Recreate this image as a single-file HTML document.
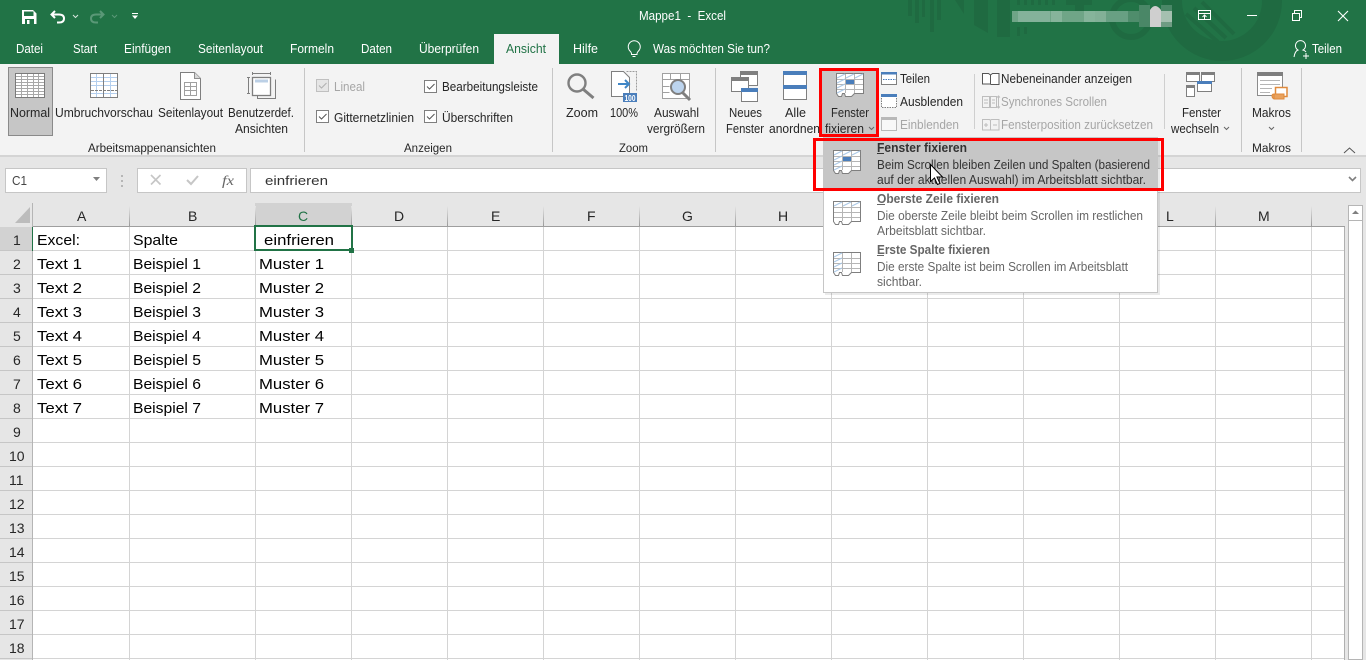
<!DOCTYPE html>
<html lang="de"><head><meta charset="utf-8"><title>Mappe1 - Excel</title>
<style>
html,body{margin:0;padding:0;width:1366px;height:660px;overflow:hidden;background:#e6e6e6}
svg{display:block}
text{font-family:"Liberation Sans",sans-serif;font-size:12.5px;fill:#262626;white-space:pre}
.w text{fill:#fff}
.g text{fill:#a6a6a6}
.c text{font-size:15px;fill:#000}
.h text{font-size:14px;fill:#262626}
.m text{fill:#444}
.m .b{font-weight:bold;font-size:12.5px}
</style></head><body>
<svg xmlns="http://www.w3.org/2000/svg" width="1366" height="660" viewBox="0 0 1366 660">
<rect width="1366" height="64" fill="#217346"/>
<!-- title pattern -->
<g fill="#1f6a41">
<rect x="908" width="4" height="16"/><rect x="915" width="4" height="23"/><rect x="922" width="3" height="17"/><rect x="930" width="4" height="32"/><rect x="937" width="4" height="20"/>
<path d="M955 0h9v14zM974 0h14v33l-14-8zM997 0h13v37h-13z"/>
<rect x="1017" y="27" width="3" height="9"/><rect x="1024" y="27" width="3" height="7"/><rect x="1017" width="3" height="5"/><rect x="1024" width="3" height="5"/><rect x="1031" width="3" height="5"/><rect x="1038" width="3" height="5"/><rect x="1045" width="3" height="5"/><rect x="1052" width="3" height="5"/>
<rect x="1066" width="26" height="5"/><rect x="1075" width="9" height="20"/>
</g>
<circle cx="1131" cy="18" r="19" fill="none" stroke="#1f6a41" stroke-width="6"/>
<circle cx="1222" cy="1" r="50" fill="none" stroke="#1f6a41" stroke-width="20"/>
<path d="M1178 20l30 25M1186 14l32 28M1194 8l32 30M1202 2l32 32" stroke="#1f6a41" stroke-width="4" fill="none"/>
<!-- blurred account -->
<rect x="1012" y="11" width="160" height="11" fill="#6fa587"/>
<rect x="1018" y="11" width="32" height="11" fill="#84b29a"/><rect x="1051" y="11" width="11" height="11" fill="#86b49b"/><rect x="1084" y="11" width="11" height="11" fill="#86b49b"/><rect x="1095" y="11" width="11" height="11" fill="#82b097"/><rect x="1106" y="11" width="22" height="11" fill="#68a083"/><rect x="1128" y="11" width="22" height="11" fill="#4f8d6c"/>
<rect x="1139" y="5" width="11" height="22" fill="#4a8767"/><rect x="1150" y="10" width="11" height="17" fill="#cfcfcf"/><path d="M1150 10q5-8 11 0z" fill="#cfcfcf"/><rect x="1161" y="11" width="11" height="11" fill="#a5c0b0"/><rect x="1161" y="22" width="11" height="5" fill="#6f9c83"/><rect x="1161" y="5" width="11" height="6" fill="#4a8767"/>
<!-- QAT -->
<path d="M22 10h11l3.500 3.500V24H22z" fill="#fff"/><rect x="24" y="11.500" width="9.500" height="4.500" fill="#217346"/><rect x="25" y="19" width="9" height="5" fill="#217346"/><rect x="27" y="20" width="2.500" height="4" fill="#fff"/>
<path d="M55 11l-3.500 3.500 3.500 3.500M52 14.500h7q5 0 5 4t-5 4h-2" fill="none" stroke="#fff" stroke-width="2"/>
<path d="M73 15l2.500 2.500 2.500-2.500" fill="none" stroke="#d8e6de" stroke-width="1"/>
<path d="M100 11l3.500 3.500-3.500 3.500M103 14.500h-7q-5 0-5 4t5 4h2" fill="none" stroke="#5a9877" stroke-width="2"/>
<path d="M112 15l2.500 2.500 2.500-2.500" fill="none" stroke="#5a9877"/>
<rect x="132" y="13" width="6" height="1" fill="#fff"/><path d="M132 15.500h6l-3 3.500z" fill="#fff"/>
<!-- title/window -->
<g class="w">
<text x="639" y="20" textLength="87" lengthAdjust="spacingAndGlyphs">Mappe1  -  Excel</text>
<text x="16" y="53" textLength="27" lengthAdjust="spacingAndGlyphs">Datei</text>
<text x="73" y="53" textLength="24" lengthAdjust="spacingAndGlyphs">Start</text>
<text x="124" y="53" textLength="47" lengthAdjust="spacingAndGlyphs">Einfügen</text>
<text x="198" y="53" textLength="65" lengthAdjust="spacingAndGlyphs">Seitenlayout</text>
<text x="290" y="53" textLength="44" lengthAdjust="spacingAndGlyphs">Formeln</text>
<text x="361" y="53" textLength="31" lengthAdjust="spacingAndGlyphs">Daten</text>
<text x="419" y="53" textLength="60" lengthAdjust="spacingAndGlyphs">Überprüfen</text>
<text x="573" y="53" textLength="25" lengthAdjust="spacingAndGlyphs">Hilfe</text>
<text x="653" y="53" textLength="117" lengthAdjust="spacingAndGlyphs">Was möchten Sie tun?</text>
<text x="1312" y="53" textLength="30" lengthAdjust="spacingAndGlyphs">Teilen</text>
</g>
<rect x="494" y="34" width="65" height="30" fill="#f3f3f3"/>
<text x="506" y="53" textLength="40" lengthAdjust="spacingAndGlyphs" style="fill:#217346">Ansicht</text>
<!-- bulb -->
<path d="M631.500 54.500v-1q0-1-1.500-2.500a6 6 0 1 1 8.500 0q-1.500 1.500-1.500 2.500v1zM632.500 56.500h3" fill="none" stroke="#fff"/>
<!-- window controls -->
<path d="M1198.500 10.500h12v9h-12zM1198.500 13.500h12M1204.500 19v-4M1202.500 17l2-2 2 2" fill="none" stroke="#fff"/>
<rect x="1247" y="15" width="10" height="1" fill="#fff"/>
<path d="M1292.500 13.500h7v7h-7zM1294.500 13v-2.500h7v7H1300" fill="none" stroke="#fff"/>
<path d="M1338 11l10 10M1348 11l-10 10" stroke="#fff" stroke-width="1.100"/>
<path d="M1294 57q1-6 4-7a5 5 0 1 1 5 0q2 .5 3 2M1303 56h6M1306 53v6" fill="none" stroke="#fff"/>
<!-- ribbon -->
<rect y="64" width="1366" height="91" fill="#f3f3f3"/>
<rect y="155" width="1366" height="2" fill="#d4d4d4"/>
<rect y="157" width="1366" height="46" fill="#e6e6e6"/>
<path d="M304.500 68v84M552.500 68v84M715.500 68v84M1241.500 68v84M1301.500 68v84" stroke="#c6c6c6"/>
<path d="M974.500 74v55M1164.500 74v55" stroke="#cfcfcf"/>
<rect x="8.500" y="67.500" width="44" height="68" fill="#c6c6c6" stroke="#8a8a8a"/>
<!-- Normal icon -->
<rect x="15.500" y="73.500" width="29" height="24" fill="#fff"/>
<path d="M16 76.500h28M16 79.500h28M16 82.500h28M16 85.500h28M16 88.500h28M16 91.500h28M16 94.500h28M21.500 74v23M27.500 74v23M33.500 74v23M38.500 74v23" stroke="#a8a8a8" fill="none"/>
<rect x="15.500" y="73.500" width="29" height="24" fill="none" stroke="#7a7a7a"/>
<!-- Umbruch icon -->
<rect x="90.500" y="73.500" width="27" height="24" fill="#fff" stroke="#7f7f7f"/>
<path d="M91 77.500h26M91 81.500h26M91 85.500h26M91 93.500h26M96.500 74v23M110.500 74v23" stroke="#b4cfee" fill="none"/>
<path d="M103.500 74v23" stroke="#7f7f7f"/><path d="M91 90.500h26" stroke="#7f7f7f" stroke-dasharray="3 1"/>
<!-- Seitenlayout icon -->
<path d="M180.500 72.500h14l6 6v21h-20z" fill="#fff" stroke="#7f7f7f"/><path d="M194.500 72.500v6h6" fill="#d8d8d8" stroke="#8f8f8f"/>
<path d="M184.500 82.500h12v13h-12zM184.500 86.500h12M184.500 90.500h12M190.500 82v13" fill="none" stroke="#a0a0a0"/>
<!-- Benutzer icon -->
<rect x="252.500" y="77.500" width="18" height="18" fill="#fff" stroke="#7f7f7f" stroke-width="1.300"/><rect x="255" y="79.500" width="13" height="3" fill="#bcd0e6"/>
<path d="M252.500 73.500h18M252.500 72v3M270.500 72v3M247 77.500h3M248.500 78v15M247 93.500h3M257.500 96v2.500h18v-19" fill="none" stroke="#7f7f7f"/>
<!-- Zoom icons -->
<circle cx="577" cy="83" r="8.500" fill="none" stroke="#7f7f7f" stroke-width="2.400"/><path d="M583.500 89.500l10 8.500" stroke="#7f7f7f" stroke-width="3"/>
<path d="M611.500 71.500h12l6 6v19h-18z" fill="#fff" stroke="#7f7f7f"/><path d="M626.500 71.500h10v20" fill="none" stroke="#9c9c9c" stroke-dasharray="2 1"/>
<path d="M625 80l4 4-4 4M618 84h11" fill="none" stroke="#3f86c6" stroke-width="2"/>
<rect x="623" y="93" width="14" height="9" fill="#4a7ebb"/><text x="624.500" y="101" textLength="11" lengthAdjust="spacingAndGlyphs" style="font-size:8px;fill:#fff;font-weight:bold">100</text>
<path d="M662.500 73.500h27v25h-27zM662.500 79.500h27M662.500 86.500h7M662.500 92.500h7M670.500 74v5M680.500 74v5" fill="#fff" stroke="#a0a0a0"/>
<circle cx="678" cy="87" r="7" fill="#bcd4ee" stroke="#7f7f7f" stroke-width="2"/><path d="M682 92l8 8" stroke="#7f7f7f" stroke-width="3"/>
<!-- Neues Fenster -->
<rect x="740.500" y="71.500" width="17" height="14" fill="#fff" stroke="#7f7f7f"/><rect x="740" y="71" width="18" height="4" fill="#7f7f7f"/>
<rect x="731.500" y="77.500" width="17" height="14" fill="#fff" stroke="#7f7f7f"/><rect x="731" y="77" width="18" height="4" fill="#7f7f7f"/>
<rect x="741.500" y="88.500" width="16" height="13" fill="#fff" stroke="#7f7f7f"/><rect x="741" y="88" width="17" height="4" fill="#4a7ebb"/>
<!-- Alle anordnen -->
<rect x="783.500" y="71.500" width="23" height="28" fill="#fff" stroke="#7f7f7f"/><rect x="783" y="71" width="24" height="4" fill="#4a7ebb"/><rect x="783" y="85" width="24" height="4" fill="#4a7ebb"/>
<!-- Fenster fixieren button -->
<rect x="820" y="69" width="58" height="67" fill="#c6c6c6"/>
<g id="fx"><path d="M836.500 73.500h27v20h-9l-3 3h-6l-1-3h-2l-1 3h-3l-2-3z" fill="#fff" stroke="#7f7f7f"/>
<path d="M837 79.500h26M837 84.500h26M837 89.500h26M845.500 74v19M854.500 74v19" stroke="#b5b5b5" fill="none"/>
<path d="M837 78l8-4M846 78l8-4M855 78l8-4M837 83l8-4M837 88l8-4M837 93l8-4" stroke="#a9c8e6" fill="none"/>
<rect x="846" y="80" width="8" height="4" fill="#4a7ebb"/></g>
<rect x="820.500" y="69.500" width="57" height="66" fill="none" stroke="#f00" stroke-width="3"/>
<path d="M869 127l2.500 2.500 2.500-2.500" fill="none" stroke="#666"/>
<!-- small icons -->
<rect x="881.500" y="73.500" width="15" height="11" fill="#fff" stroke="#7f7f7f"/><rect x="881" y="72" width="16" height="2.500" fill="#4a7ebb"/><path d="M883 79.500h13" stroke="#4a7ebb" stroke-dasharray="1.500 1"/>
<rect x="881.500" y="95.500" width="15" height="12" fill="#fff" stroke="#7f7f7f" stroke-dasharray="1.500 1"/><rect x="881" y="94" width="16" height="3" fill="#4a7ebb"/>
<rect x="881.500" y="118.500" width="15" height="12" fill="#f8f8f8" stroke="#b8b8b8"/><rect x="881" y="117" width="16" height="3" fill="#b8b8b8"/>
<path d="M982.500 73.500h6l2 1.500v9h-8zM990.500 75l2-1.500h6.500v11h-8.500" fill="#fff" stroke="#555"/>
<g stroke="#bdbdbd" fill="none"><path d="M982.500 96.500h7v11h-7zM990.500 96.500h6v11h-6zM984 100h4M984 103h4M992 100h3M992 103h3M998.500 96v12M997 97.500l1.500-1.500 1.500 1.500M997 106.500l1.500 1.500 1.500-1.500"/>
<path d="M982.500 119.500h7l1 1v9.500h-8zM990.500 120l1-.5h7.500v10.500h-8.500M984 125h4M986 123v4M993 125h4"/></g>
<!-- fenster wechseln -->
<path d="M1186.500 72.500h13v9h-13zM1201.500 72.500h13v9h-13zM1186.500 85.500h8v11h-8z" fill="#fff" stroke="#7f7f7f"/>
<rect x="1186" y="72" width="14" height="3" fill="#7f7f7f"/><rect x="1201" y="72" width="14" height="3" fill="#7f7f7f"/><rect x="1186" y="85" width="9" height="3" fill="#7f7f7f"/>
<rect x="1197.500" y="81.500" width="14" height="10" fill="#fff" stroke="#7f7f7f"/><rect x="1197" y="81" width="15" height="3" fill="#4a7ebb"/>
<!-- Makros icon -->
<rect x="1257.500" y="72.500" width="25" height="23" fill="#fff" stroke="#8c8c8c"/><rect x="1257" y="72" width="26" height="4" fill="#7f7f7f"/>
<path d="M1260 80.500h20M1260 84.500h20M1260 88.500h12M1260 92.500h10" stroke="#b5b5b5"/>
<path d="M1275.500 87.500h11.500v9h-11.500z" fill="#fff" stroke="#e08a3c" stroke-width="1.500"/><path d="M1274 94h10v5h-10zM1274 99v-5q-2 0-2 2t2 3" fill="#e9a15d" stroke="#e08a3c"/>
<path d="M1269 127l2.500 2.500 2.500-2.500M1224 127l2.500 2.500 2.500-2.500" fill="none" stroke="#666"/>
<path d="M1344 153l5.500-5 5.500 5" fill="none" stroke="#555"/>
<!-- Ribbon text -->
<g>
<text x="10" y="117" textLength="40" lengthAdjust="spacingAndGlyphs">Normal</text>
<text x="55" y="117" textLength="98" lengthAdjust="spacingAndGlyphs">Umbruchvorschau</text>
<text x="158" y="117" textLength="65" lengthAdjust="spacingAndGlyphs">Seitenlayout</text>
<text x="228" y="117" textLength="66" lengthAdjust="spacingAndGlyphs">Benutzerdef.</text>
<text x="235" y="133" textLength="53" lengthAdjust="spacingAndGlyphs">Ansichten</text>
<text x="88" y="152" textLength="128" lengthAdjust="spacingAndGlyphs" style="font-size:11.5px">Arbeitsmappenansichten</text>
<text x="404" y="152" textLength="48" lengthAdjust="spacingAndGlyphs" style="font-size:11.5px">Anzeigen</text>
<text x="619" y="152" textLength="29" lengthAdjust="spacingAndGlyphs" style="font-size:11.5px">Zoom</text>
<text x="1252" y="152" textLength="39" lengthAdjust="spacingAndGlyphs" style="font-size:11.5px">Makros</text>
<text x="334" y="122" textLength="80" lengthAdjust="spacingAndGlyphs">Gitternetzlinien</text>
<text x="442" y="91" textLength="96" lengthAdjust="spacingAndGlyphs">Bearbeitungsleiste</text>
<text x="442" y="122" textLength="71" lengthAdjust="spacingAndGlyphs">Überschriften</text>
<text x="566" y="117" textLength="32" lengthAdjust="spacingAndGlyphs">Zoom</text>
<text x="610" y="117" textLength="28" lengthAdjust="spacingAndGlyphs">100%</text>
<text x="654" y="117" textLength="45" lengthAdjust="spacingAndGlyphs">Auswahl</text>
<text x="647" y="133" textLength="58" lengthAdjust="spacingAndGlyphs">vergrößern</text>
<text x="729" y="117" textLength="33" lengthAdjust="spacingAndGlyphs">Neues</text>
<text x="726" y="133" textLength="38" lengthAdjust="spacingAndGlyphs">Fenster</text>
<text x="785" y="117" textLength="21" lengthAdjust="spacingAndGlyphs">Alle</text>
<text x="769" y="133" textLength="51" lengthAdjust="spacingAndGlyphs">anordnen</text>
<text x="831" y="117" textLength="38" lengthAdjust="spacingAndGlyphs">Fenster</text>
<text x="825" y="133" textLength="39" lengthAdjust="spacingAndGlyphs">fixieren</text>
<text x="900" y="83" textLength="30" lengthAdjust="spacingAndGlyphs">Teilen</text>
<text x="900" y="106" textLength="63" lengthAdjust="spacingAndGlyphs">Ausblenden</text>
<text x="1001" y="83" textLength="131" lengthAdjust="spacingAndGlyphs">Nebeneinander anzeigen</text>
<text x="1182" y="117" textLength="39" lengthAdjust="spacingAndGlyphs">Fenster</text>
<text x="1171" y="133" textLength="48" lengthAdjust="spacingAndGlyphs">wechseln</text>
<text x="1252" y="117" textLength="39" lengthAdjust="spacingAndGlyphs">Makros</text>
</g>
<g class="g">
<text x="334" y="91" textLength="31" lengthAdjust="spacingAndGlyphs">Lineal</text>
<text x="900" y="129" textLength="59" lengthAdjust="spacingAndGlyphs">Einblenden</text>
<text x="1001" y="106" textLength="106" lengthAdjust="spacingAndGlyphs">Synchrones Scrollen</text>
<text x="1001" y="129" textLength="152" lengthAdjust="spacingAndGlyphs">Fensterposition zurücksetzen</text>
</g>
<!-- checkboxes -->
<rect x="316.500" y="79.500" width="12" height="12" fill="#e6e6e6" stroke="#c0c0c0"/><path d="M319 85.500l2.500 2.500 5-5" fill="none" stroke="#b0b0b0"/>
<rect x="316.500" y="110.500" width="12" height="12" fill="#fff" stroke="#7f7f7f"/><path d="M319 116.500l2.500 2.500 5-5" fill="none" stroke="#555"/>
<rect x="424.500" y="80.500" width="12" height="12" fill="#fff" stroke="#7f7f7f"/><path d="M427 86.500l2.500 2.500 5-5" fill="none" stroke="#555"/>
<rect x="424.500" y="110.500" width="12" height="12" fill="#fff" stroke="#7f7f7f"/><path d="M427 116.500l2.500 2.500 5-5" fill="none" stroke="#555"/>
<!-- Formula bar -->
<rect x="5.500" y="168.500" width="101" height="24" fill="#fff" stroke="#c6c6c6"/>
<text x="12" y="185" textLength="15" lengthAdjust="spacingAndGlyphs" style="font-size:13px;fill:#444">C1</text>
<path d="M93 177h7l-3.500 4z" fill="#7f7f7f"/>
<path d="M122 175v2M122 180v2M122 185v2" stroke="#a6a6a6" stroke-width="1.500"/>
<rect x="137.500" y="168.500" width="109" height="24" fill="#fff" stroke="#c6c6c6"/>
<path d="M151 175l9.500 9.500M160.500 175l-9.500 9.500" stroke="#c6c6c6" stroke-width="1.600"/>
<path d="M187 180l4 4 7-8" fill="none" stroke="#c6c6c6" stroke-width="2"/>
<text x="222" y="185" textLength="12" lengthAdjust="spacingAndGlyphs" style="font-family:'Liberation Serif',serif;font-style:italic;font-size:14px;fill:#666">fx</text>
<rect x="250.500" y="168.500" width="1110" height="24" fill="#fff" stroke="#c6c6c6"/>
<text x="265" y="185" textLength="63" lengthAdjust="spacingAndGlyphs" style="font-size:13px;fill:#333">einfrieren</text>
<path d="M1349 177l3.500 3.500 3.500-3.500" fill="none" stroke="#7f7f7f" stroke-width="1.600"/>
<!-- sheet -->
<rect x="33" y="227" width="1312" height="433" fill="#fff"/>
<rect x="0" y="203" width="1346" height="24" fill="#e6e6e6"/>
<rect x="0" y="227" width="33" height="433" fill="#e6e6e6"/>
<rect x="255" y="203" width="97" height="24" fill="#d2d2d2"/>
<rect x="0" y="227" width="33" height="24" fill="#d2d2d2"/>
<path d="M30 207v16H15z" fill="#bcbcbc"/>
<path d="M129.500 227V660M255.500 227V660M351.500 227V660M447.500 227V660M543.500 227V660M639.500 227V660M735.500 227V660M831.500 227V660M927.500 227V660M1023.500 227V660M1119.500 227V660M1215.500 227V660M1311.500 227V660" stroke="#d4d4d4"/>
<path d="M33 250.500H1345M33 274.500H1345M33 298.500H1345M33 322.500H1345M33 346.500H1345M33 370.500H1345M33 394.500H1345M33 418.500H1345M33 442.500H1345M33 466.500H1345M33 490.500H1345M33 514.500H1345M33 538.500H1345M33 562.500H1345M33 586.500H1345M33 610.500H1345M33 634.500H1345M33 658.500H1345" stroke="#d4d4d4"/>
<path d="M0 274.500H33M0 298.500H33M0 322.500H33M0 346.500H33M0 370.500H33M0 394.500H33M0 418.500H33M0 442.500H33M0 466.500H33M0 490.500H33M0 514.500H33M0 538.500H33M0 562.500H33M0 586.500H33M0 610.500H33M0 634.500H33M0 658.500H33M0 250.500H33" stroke="#c6c6c6"/>
<path d="M33 226.500H1345" stroke="#9e9e9e"/><path d="M1344.500 227V660" stroke="#b0b0b0"/><path d="M32.500 203V660" stroke="#b5b5b5"/>
<defs><linearGradient id="s" x1="0" y1="0" x2="0" y2="1"><stop offset="0" stop-color="#e6e6e6"/><stop offset="1" stop-color="#9a9a9a"/></linearGradient></defs>
<g fill="url(#s)"><rect x="129" y="206" width="1" height="20"/><rect x="255" y="206" width="1" height="20"/><rect x="351" y="206" width="1" height="20"/><rect x="447" y="206" width="1" height="20"/><rect x="543" y="206" width="1" height="20"/><rect x="639" y="206" width="1" height="20"/><rect x="735" y="206" width="1" height="20"/><rect x="831" y="206" width="1" height="20"/><rect x="927" y="206" width="1" height="20"/><rect x="1023" y="206" width="1" height="20"/><rect x="1119" y="206" width="1" height="20"/><rect x="1215" y="206" width="1" height="20"/><rect x="1311" y="206" width="1" height="20"/></g>
<g class="h">
<text x="77" y="221">A</text><text x="188" y="221">B</text><text x="298" y="221" style="fill:#217346">C</text><text x="394" y="221">D</text><text x="491" y="221">E</text><text x="587" y="221">F</text><text x="682" y="221">G</text><text x="778" y="221">H</text><text x="1166" y="221">L</text><text x="1258" y="221">M</text>
<text x="13" y="245">1</text><text x="13" y="269">2</text><text x="13" y="293">3</text><text x="13" y="317">4</text><text x="13" y="341">5</text><text x="13" y="365">6</text><text x="13" y="389">7</text><text x="13" y="413">8</text><text x="13" y="437">9</text>
<text x="9" y="461">10</text><text x="9" y="485">11</text><text x="9" y="509">12</text><text x="9" y="533">13</text><text x="9" y="557">14</text><text x="9" y="581">15</text><text x="9" y="605">16</text><text x="9" y="629">17</text><text x="9" y="653">18</text>
</g>
<g class="c">
<text x="37" y="245" textLength="43" lengthAdjust="spacingAndGlyphs">Excel:</text><text x="133" y="245" textLength="45" lengthAdjust="spacingAndGlyphs">Spalte</text><text x="264" y="245" textLength="70" lengthAdjust="spacingAndGlyphs">einfrieren</text>
<text x="37" y="269" textLength="45" lengthAdjust="spacingAndGlyphs">Text 1</text><text x="133" y="269" textLength="68" lengthAdjust="spacingAndGlyphs">Beispiel 1</text><text x="259" y="269" textLength="65" lengthAdjust="spacingAndGlyphs">Muster 1</text>
<text x="37" y="293" textLength="45" lengthAdjust="spacingAndGlyphs">Text 2</text><text x="133" y="293" textLength="68" lengthAdjust="spacingAndGlyphs">Beispiel 2</text><text x="259" y="293" textLength="65" lengthAdjust="spacingAndGlyphs">Muster 2</text>
<text x="37" y="317" textLength="45" lengthAdjust="spacingAndGlyphs">Text 3</text><text x="133" y="317" textLength="68" lengthAdjust="spacingAndGlyphs">Beispiel 3</text><text x="259" y="317" textLength="65" lengthAdjust="spacingAndGlyphs">Muster 3</text>
<text x="37" y="341" textLength="45" lengthAdjust="spacingAndGlyphs">Text 4</text><text x="133" y="341" textLength="68" lengthAdjust="spacingAndGlyphs">Beispiel 4</text><text x="259" y="341" textLength="65" lengthAdjust="spacingAndGlyphs">Muster 4</text>
<text x="37" y="365" textLength="45" lengthAdjust="spacingAndGlyphs">Text 5</text><text x="133" y="365" textLength="68" lengthAdjust="spacingAndGlyphs">Beispiel 5</text><text x="259" y="365" textLength="65" lengthAdjust="spacingAndGlyphs">Muster 5</text>
<text x="37" y="389" textLength="45" lengthAdjust="spacingAndGlyphs">Text 6</text><text x="133" y="389" textLength="68" lengthAdjust="spacingAndGlyphs">Beispiel 6</text><text x="259" y="389" textLength="65" lengthAdjust="spacingAndGlyphs">Muster 6</text>
<text x="37" y="413" textLength="45" lengthAdjust="spacingAndGlyphs">Text 7</text><text x="133" y="413" textLength="68" lengthAdjust="spacingAndGlyphs">Beispiel 7</text><text x="259" y="413" textLength="65" lengthAdjust="spacingAndGlyphs">Muster 7</text>
</g>
<!-- selection -->
<rect x="255" y="226" width="97" height="24" fill="none" stroke="#217346" stroke-width="2"/>
<rect x="349" y="248" width="5" height="5" fill="#217346"/>
<rect x="32" y="227" width="1" height="24" fill="#217346"/>
<!-- scrollbar -->
<rect x="1348.500" y="205.500" width="14" height="454" fill="#fff" stroke="#b5b5b5"/>
<path d="M1349 220.500h13" stroke="#b5b5b5"/>
<path d="M1352 214h7l-3.500-3.500z" fill="#7f7f7f"/>
<!-- dropdown -->
<rect x="825" y="139" width="335" height="156" fill="#000" opacity=".08"/>
<rect x="823.500" y="137.500" width="334" height="155" fill="#fff" stroke="#c6c6c6"/>
<rect x="824" y="140" width="333" height="50" fill="#c6c6c6"/>
<use href="#fx" transform="translate(-3 77)"/>
<g transform="translate(-3 128)"><path d="M836.500 73.500h27v20h-9l-3 3h-6l-1-3h-2l-1 3h-3l-2-3z" fill="#fff" stroke="#7f7f7f"/><path d="M837 79.500h26M837 84.500h26M837 89.500h26M845.500 74v19M854.500 74v19" stroke="#b5b5b5" fill="none"/><path d="M837 78l8-4M846 78l8-4M855 78l8-4" stroke="#a9c8e6" fill="none"/></g>
<g transform="translate(-3 179)"><path d="M836.500 73.500h27v20h-9l-3 3h-6l-1-3h-2l-1 3h-3l-2-3z" fill="#fff" stroke="#7f7f7f"/><path d="M837 79.500h26M837 84.500h26M837 89.500h26M845.500 74v19M854.500 74v19" stroke="#b5b5b5" fill="none"/><path d="M837 78l8-4M837 83l8-4M837 88l8-4M837 93l8-4" stroke="#a9c8e6" fill="none"/></g>
<g class="m">
<text class="b" x="877" y="152" textLength="90" lengthAdjust="spacingAndGlyphs" style="fill:#333">Fenster fixieren</text>
<text x="877" y="169" textLength="273" lengthAdjust="spacingAndGlyphs" style="fill:#333">Beim Scrollen bleiben Zeilen und Spalten (basierend</text>
<text x="877" y="184" textLength="269" lengthAdjust="spacingAndGlyphs" style="fill:#333">auf der aktuellen Auswahl) im Arbeitsblatt sichtbar.</text>
<text class="b" x="877" y="203" textLength="122" lengthAdjust="spacingAndGlyphs" style="fill:#666">Oberste Zeile fixieren</text>
<text x="877" y="220" textLength="266" lengthAdjust="spacingAndGlyphs" style="fill:#666">Die oberste Zeile bleibt beim Scrollen im restlichen</text>
<text x="877" y="235" textLength="109" lengthAdjust="spacingAndGlyphs" style="fill:#666">Arbeitsblatt sichtbar.</text>
<text class="b" x="877" y="254" textLength="113" lengthAdjust="spacingAndGlyphs" style="fill:#666">Erste Spalte fixieren</text>
<text x="877" y="271" textLength="251" lengthAdjust="spacingAndGlyphs" style="fill:#666">Die erste Spalte ist beim Scrollen im Arbeitsblatt</text>
<text x="877" y="286" textLength="45" lengthAdjust="spacingAndGlyphs" style="fill:#666">sichtbar.</text>
</g>
<path d="M877 153.500h7" stroke="#333"/><path d="M877 204.500h8M877 255.500h7" stroke="#666"/>
<rect x="814.500" y="139.500" width="348" height="50" fill="none" stroke="#f00" stroke-width="3"/>
<!-- cursor -->
<path d="M930.500 164.500v17l4-3.500 3 6.500 2.500-1-3-6.500h5.500z" fill="#fff" stroke="#000"/>
</svg>
</body></html>
